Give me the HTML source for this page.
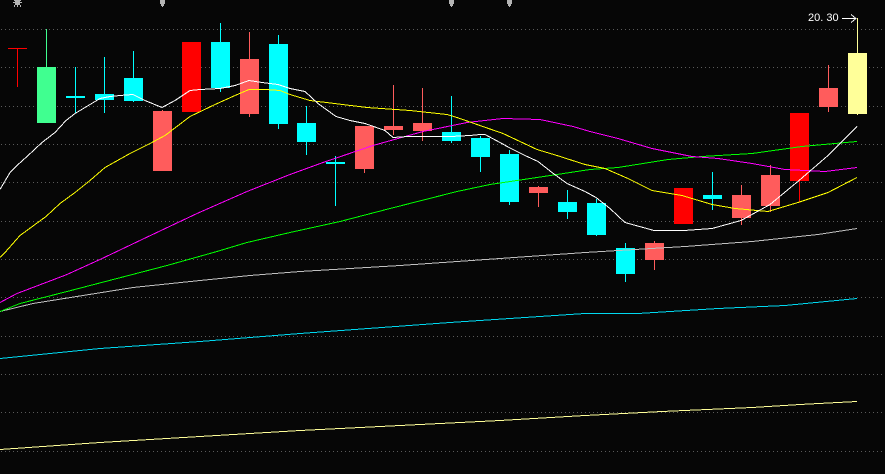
<!DOCTYPE html>
<html><head><meta charset="utf-8"><style>
html,body{margin:0;padding:0;background:#060606;width:885px;height:474px;overflow:hidden}
svg{display:block}
text{font-family:"Liberation Sans",sans-serif;font-size:11px;fill:#fff}
</style></head><body>
<svg width="885" height="474" viewBox="0 0 885 474" xmlns="http://www.w3.org/2000/svg">
<rect width="885" height="474" fill="#060606"/>
<g shape-rendering="crispEdges">
<g stroke="#5a5a5a" stroke-width="1" stroke-dasharray="1 3" fill="none">
<path d="M1 29.5H885M1 67.5H885M1 106.5H885M1 144.5H885M1 182.5H885M1 221.5H885M1 259.5H885M1 297.5H885M1 336.5H885M1 374.5H885M1 412.5H885M1 451.5H885"/>
</g>
<!-- wicks and bodies -->
<g fill="#ff0000">
<rect x="17" y="48" width="1" height="39"/><rect x="8" y="48" width="19" height="1"/>
<rect x="182" y="42" width="19" height="70"/>
<rect x="674" y="188" width="19" height="36"/>
<rect x="790" y="113" width="19" height="68"/><rect x="799" y="181" width="1" height="21"/>
</g>
<g fill="#40ff90">
<rect x="46" y="29" width="1" height="38"/><rect x="37" y="67" width="19" height="56"/>
</g>
<g fill="#00ffff">
<rect x="75" y="67" width="1" height="46"/><rect x="66" y="96" width="19" height="2"/>
<rect x="104" y="57" width="1" height="56"/><rect x="95" y="94" width="19" height="6"/>
<rect x="133" y="51" width="1" height="51"/><rect x="124" y="78" width="19" height="23"/>
<rect x="220" y="23" width="1" height="69"/><rect x="211" y="42" width="19" height="46"/>
<rect x="278" y="35" width="1" height="94"/><rect x="269" y="44" width="19" height="80"/>
<rect x="306" y="106" width="1" height="49"/><rect x="297" y="123" width="19" height="19"/>
<rect x="335" y="156" width="1" height="50"/><rect x="326" y="162" width="19" height="2"/>
<rect x="451" y="96" width="1" height="47"/><rect x="442" y="132" width="19" height="9"/>
<rect x="480" y="136" width="1" height="36"/><rect x="471" y="138" width="19" height="19"/>
<rect x="509" y="150" width="1" height="55"/><rect x="500" y="154" width="19" height="48"/>
<rect x="567" y="190" width="1" height="29"/><rect x="558" y="202" width="19" height="10"/>
<rect x="596" y="199" width="1" height="37"/><rect x="587" y="203" width="19" height="32"/>
<rect x="625" y="243" width="1" height="39"/><rect x="616" y="248" width="19" height="26"/>
<rect x="712" y="172" width="1" height="38"/><rect x="703" y="195" width="19" height="4"/>
</g>
<g fill="#ff5c5c">
<rect x="162" y="110" width="1" height="2"/><rect x="153" y="111" width="19" height="60"/>
<rect x="249" y="32" width="1" height="85"/><rect x="240" y="59" width="19" height="55"/>
<rect x="364" y="126" width="1" height="47"/><rect x="355" y="126" width="19" height="43"/>
<rect x="393" y="85" width="1" height="50"/><rect x="384" y="126" width="19" height="4"/>
<rect x="422" y="88" width="1" height="53"/><rect x="413" y="123" width="19" height="8"/>
<rect x="538" y="186" width="1" height="21"/><rect x="529" y="187" width="19" height="6"/>
<rect x="654" y="241" width="1" height="29"/><rect x="645" y="243" width="19" height="17"/>
<rect x="741" y="185" width="1" height="40"/><rect x="732" y="195" width="19" height="23"/>
<rect x="770" y="165" width="1" height="47"/><rect x="761" y="175" width="19" height="31"/>
<rect x="828" y="65" width="1" height="47"/><rect x="819" y="88" width="19" height="19"/>
</g>
<g fill="#ffff99">
<rect x="857" y="18" width="1" height="97"/><rect x="848" y="53" width="19" height="61"/>
</g>
<!-- moving averages -->
<g fill="none" stroke-width="1">
<polyline stroke="#ffff99" points="0,449.5 100,442.5 200,436.5 300,430.5 400,425.5 500,420.5 585,415.5 662,411.5 752,407.5 800,404.5 857,401.5"/>
<polyline stroke="#00d8f0" points="0,358.5 100,348.5 200,341.5 300,333.5 450,322.5 585,313.5 638,313.5 718,308.5 785,305.5 857,298.5"/>
<polyline stroke="#c0c0c0" points="0,311.5 33,303.5 83,295.5 133,287.5 200,280.5 250,275.5 300,271.5 400,265.5 500,258.5 585,252.5 635,249.5 685,246.5 752,241.5 818,234.5 857,228.5"/>
<polyline stroke="#00ff00" points="0,311.5 20,303.5 67,291.5 117,278.5 167,265.5 217,251.5 247,242.5 290,232.5 340,221.5 390,208.5 457,191.5 490,184.5 537,177.5 590,169.5 618,167.5 668,159.5 702,156.5 752,153.5 802,146.5 857,141.5"/>
<polyline stroke="#ff00ff" points="0,302.5 17,293.5 67,274.5 100,259.5 142,239.5 197,213.5 247,191.5 290,174.5 323,162.5 373,145.5 423,131.5 467,122.5 503,118.5 540,119.5 573,126.5 590,131.5 618,138.5 652,148.5 692,156.5 718,158.5 752,163.5 785,169.5 825,171.5 857,167.5"/>
<polyline stroke="#ffff00" points="0,257.5 5,252.5 20,235.5 46,216.5 60,203.5 75,192.5 90,180.5 105,167.5 130,153.5 150,143.5 165,135.5 190,116.5 215,104.5 235,95.5 249,89.5 265,89.5 280,90.5 290,94.5 310,100.5 367,107.5 410,110.5 447,114.5 457,117.5 477,124.5 503,133.5 537,149.5 557,155.5 585,164.5 605,168.5 628,178.5 652,190.5 682,195.5 712,204.5 735,208.5 768,211.5 798,202.5 828,192.5 857,177.5"/>
<polyline stroke="#ffffff" points="0,189.5 10,172.5 17,165.5 27,156.5 42,142.5 55,132.5 66,120.5 75,113.5 85,107.5 100,98.5 110,96.5 120,95.5 133,94.5 145,100.5 162,107.5 175,100.5 190,90.5 200,89.5 220,88.5 235,85.5 249,80.5 262,82.5 278,84.5 290,88.5 305,91.5 318,103.5 336,116.5 350,120.5 365,123.5 385,130.5 393,137.5 408,136.5 422,136.5 451,136.5 470,135.5 480,134.5 485,134.5 500,142.5 509,147.5 525,155.5 538,161.5 552,172.5 567,183.5 585,191.5 596,197.5 610,208.5 625,222.5 654,230.5 684,230.5 712,228.5 741,220.5 770,204.5 799,180.5 828,155.5 857,126.5"/>
</g>
<!-- arrow -->
<path d="M842 18.5H856M851 14.5L856 18.5L851 22.5" fill="none" stroke="#fff" stroke-width="1"/>
<!-- top markers -->
<g fill="#b4b4b4">
<rect x="15" y="0" width="5" height="5"/><rect x="13" y="2" width="9" height="1"/><rect x="14" y="0" width="1" height="1"/><rect x="20" y="0" width="1" height="1"/><rect x="14" y="5" width="1" height="2"/><rect x="20" y="5" width="1" height="2"/><rect x="17" y="5" width="1" height="2"/>
<rect x="160" y="0" width="5" height="4"/><rect x="161" y="4" width="3" height="2"/><rect x="162" y="6" width="1" height="1"/>
<rect x="449" y="0" width="5" height="4"/><rect x="450" y="4" width="3" height="2"/><rect x="451" y="6" width="1" height="1"/>
<rect x="507" y="0" width="5" height="4"/><rect x="508" y="4" width="3" height="2"/><rect x="509" y="6" width="1" height="1"/>
</g>
</g>
<text x="808" y="21">20. 30</text>
</svg>
</body></html>
